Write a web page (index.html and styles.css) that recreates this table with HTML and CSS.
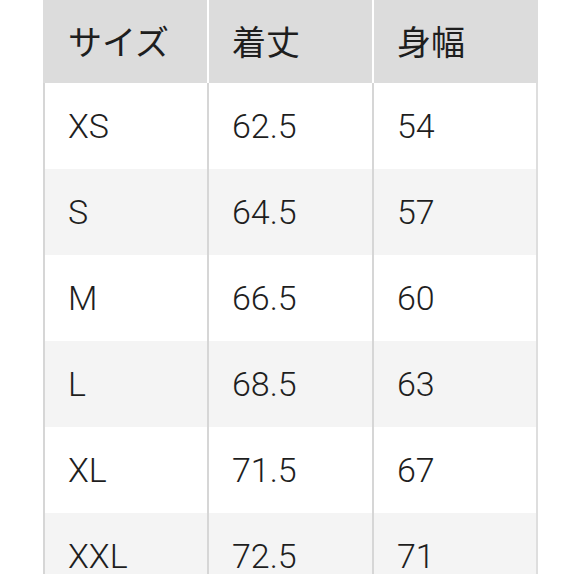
FILE: index.html
```html
<!DOCTYPE html>
<html lang="ja">
<head>
<meta charset="utf-8">
<link rel="stylesheet" href="styles.css">
</head>
<body>
<div class="table">
  <div class="row head"><div class="cell">サイズ</div><div class="cell">着丈</div><div class="cell">身幅</div></div>
  <div class="row"><div class="cell">XS</div><div class="cell">62.5</div><div class="cell">54</div></div>
  <div class="row alt"><div class="cell">S</div><div class="cell">64.5</div><div class="cell">57</div></div>
  <div class="row"><div class="cell">M</div><div class="cell">66.5</div><div class="cell">60</div></div>
  <div class="row alt"><div class="cell">L</div><div class="cell">68.5</div><div class="cell">63</div></div>
  <div class="row"><div class="cell">XL</div><div class="cell">71.5</div><div class="cell">67</div></div>
  <div class="row alt"><div class="cell">XXL</div><div class="cell">72.5</div><div class="cell">71</div></div>
</div>
</body>
</html>
```
FILE: styles.css
```css
html, body {
  margin: 0;
  padding: 0;
  background: #fff;
  height: 574px;
  overflow: hidden;
}
.table {
  margin-left: 43px;
  width: 495px;
  font-family: "Roboto", "Noto Sans CJK JP", sans-serif;
  font-weight: 300;
  font-size: 34px;
  color: #1e1e1e;
}
.row {
  display: grid;
  grid-template-columns: 164px 165px 166px;
  height: 86px;
  background: #fff;
}
.row.alt {
  background: #f4f4f4;
}
.cell {
  display: flex;
  align-items: center;
  padding-left: 23px;
  border-left: 2px solid #d6d6d6;
}
.cell:last-child {
  border-right: 2px solid #dedede;
}
.row.head {
  height: 83px;
  background: #fff;
}
.row.head .cell {
  background: #dcdcdc;
  border-left: 2px solid #fff;
  padding-bottom: 2px;
  font-weight: 400;
}
.row.head .cell:first-child {
  border-left-color: #dcdcdc;
}
.row.head .cell:last-child {
  border-right: 2px solid #dcdcdc;
}
```
